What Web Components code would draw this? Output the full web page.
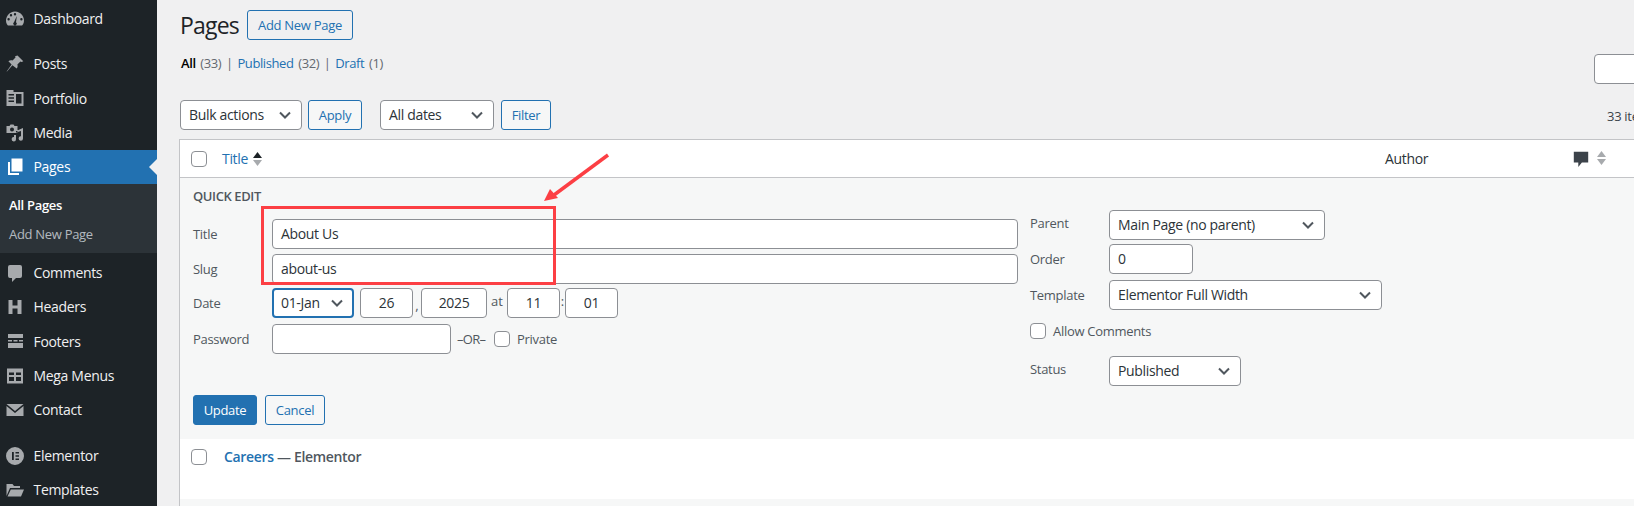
<!DOCTYPE html>
<html><head><meta charset="utf-8">
<style>
html,body{margin:0;padding:0;height:506px;overflow:hidden;background:#f0f0f1}
body{font:13px/1.4 "Open Sans","Noto Sans",sans-serif;color:#3c434a}
wp-app{display:flex;width:1634px;height:506px}
</style></head><body>
<wp-app></wp-app>
<script>
const ICONS={
dash:'<path d="M10 2.500a9 9 0 0 0-8.700 11.200c.3 1 .9 2 1.600 2.800h14.200c.7-.8 1.300-1.800 1.600-2.800A9 9 0 0 0 10 2.500zM6 5a1.200 1.200 0 1 1 0 2.400A1.200 1.200 0 0 1 6 5zm4-1a1.200 1.200 0 1 1 0 2.400A1.200 1.200 0 0 1 10 4zM3.600 9a1.200 1.200 0 1 1 0 2.400 1.200 1.200 0 0 1 0-2.400zm12.800 0a1.200 1.200 0 1 1 0 2.400 1.200 1.200 0 0 1 0-2.400zM11.800 7l-.8 6.200a1.700 1.700 0 1 1-2 0z" fill-rule="evenodd"/>',
pin:'<path d="M12.500 1.500l5.800 5.800-1.700.6-1.200-.5-3 3c.5 1.600.2 3-.7 4.100L7.400 11.200 2 17.600l-.4-.2 5-6.900L3.400 7.200c1.100-.9 2.600-1.200 4.100-.7l3-3-.4-1.200z"/>',
folio:'<path d="M1.500 2h7v2h10v14h-17zm2 4v1.500h5.500V6zm0 3.200v1.600h5.500V9.200zm0 3.300V14h5.500v-1.500zM11 6v9.500h5.500V6z" fill-rule="evenodd"/>',
media:'<path d="M1.500 3h3l1-1.500h3L9.500 3h3v7h-11zm5.500 1.500a2 2 0 1 0 0 4 2 2 0 0 0 0-4zM18 5v10.500a2.200 2.200 0 1 1-2-2.200V8l-5 1.500v6.700a2.200 2.200 0 1 1-2-2.200v-2h2V8l7-3z" fill-rule="evenodd"/>',
pages:'<path d="M6.500 1.500h11v13h-11z" fill="#fff"/><path d="M3 5h2v11h9v2H3z" fill="#fff"/>',
comment:'<path d="M5 2h10a2 2 0 0 1 2 2v9a2 2 0 0 1-2 2h-4l-4 4v-4H5a2 2 0 0 1-2-2V4a2 2 0 0 1 2-2z"/>',
h:'<path d="M3.500 3h4v5.500h5V3h4v14h-4v-5.500h-5V17h-4z"/>',
foot:'<path d="M3 3h15v4H3zM3 9h4v1.500H3zM8.500 9h4v1.500h-4zM14 9h4v1.500h-4zM3 12h15v5H3z"/>',
mega:'<path d="M2 2.500h16v15H2zm2 4v2.500h5V6.500zm7 0v2.500h5V6.500zM4 11v4h5v-4zm7 0v4h5v-4z" fill-rule="evenodd"/>',
mail:'<path d="M1.500 4h17L10 11zM1.500 6l8.500 7 8.500-7v10h-17z"/>',
el:'<path d="M10 1a9 9 0 1 0 0 18 9 9 0 0 0 0-18zM7 6h1.800v8H7zm3.500 0H14v1.600h-3.500zm0 3.200H14v1.600h-3.500zm0 3.200H14V14h-3.500z" fill-rule="evenodd"/>',
tpl:'<path d="M1.500 4h6l1.500 2h6v2H5l-3.500 8zM5.800 9.500H19l-3 7H2.500z"/>'
};
function def(name,css,html){
  customElements.define(name,class extends HTMLElement{
    constructor(){super();const s=this.attachShadow({mode:'open'});
      s.innerHTML='<style>'+css+'</style>'+(typeof html==='function'?html(this):html);}
  });
}
def('wp-menu-item',`:host{display:flex;align-items:center;height:34.200px;color:#f0f0f1;font-size:14px;letter-spacing:-.32px}
.i{width:30px;margin-left:0;display:flex;justify-content:center;flex:none}
svg{width:20px;height:20px;fill:#a7aaad}
.t{margin-left:3.500px}
:host([current]){background:#2271b1;color:#fff;position:relative;width:157px}
:host([current])::after{content:"";position:absolute;right:0;top:50%;margin-top:-8px;border:8px solid transparent;border-right-color:#f0f0f1}
`,h=>`<span class="i"><svg viewBox="0 0 20 20">${ICONS[h.getAttribute('icon')]}</svg></span><span class="t"><slot></slot></span>`);
def('wp-submenu',`:host{display:flex;flex-direction:column;background:#2c3338;padding:7px 0 4px;height:58px;margin-bottom:3px;font-size:13px;letter-spacing:-.3px;color:rgba(240,246,252,.7)}
::slotted(*){display:block;height:29px;line-height:29px;padding-left:9px}
`,`<slot></slot>`);
def('wp-sidebar',`:host{display:block;width:157px;height:506px;background:#1d2327;flex:none;overflow:hidden}
.gap{height:11px}.gap2{height:12px}`,`<div style="height:2px"></div><slot name="a"></slot><div class="gap"></div><slot name="b"></slot><div class="gap2"></div><slot name="c"></slot>`);
def('wp-button',`:host{display:inline-flex;align-items:center;justify-content:center;box-sizing:border-box;height:30px;border:1px solid #2271b1;border-radius:3px;color:#2271b1;background:#f6f7f7;font-size:13px;letter-spacing:-.3px;flex:none}
:host([primary]){background:#2271b1;color:#fff}
:host([plain]){background:transparent}`,`<slot></slot>`);
def('wp-field',`:host{display:flex;align-items:center;box-sizing:border-box;height:30px;border:1px solid #8c8f94;border-radius:4px;background:#fff;color:#2c3338;font-size:14px;letter-spacing:-.33px;padding:0 8px;flex:none;white-space:nowrap}
:host([center]){justify-content:center}
:host([focus]){border:2px solid #2271b1;padding:0 7px}
.c{margin-left:auto;width:16px;height:16px;fill:none;stroke:#50575e;stroke-width:2;display:none}
:host([select]) .c{display:block}
`,`<slot></slot><svg class="c" viewBox="0 0 16 16"><path d="M3 5.500l5 5 5-5"/></svg>`);
def('wp-check',`:host{display:block;box-sizing:border-box;width:16px;height:16px;border:1px solid #8c8f94;border-radius:4px;background:#fff;flex:none}`,``);
def('wp-row',`:host{display:flex;align-items:center;height:30px;flex:none}
.l{width:79px;color:#50575e;font-size:13px;letter-spacing:-.3px;flex:none}`,h=>`<span class="l">${h.getAttribute('label')}</span><slot></slot>`);
def('wp-quickedit',`:host{display:flex;background:#f6f7f7;height:262px;box-sizing:border-box;padding:9px 0 0 13px;border-top:1px solid #c3c4c7}
.left{width:837px;flex:none;display:flex;flex-direction:column}
.right{display:flex;flex-direction:column;margin-top:23px;flex:none}
.h{font-size:13px;font-weight:600;color:#50575e;height:32px;line-height:18px;letter-spacing:-.4px}
`,`<div class="left"><div class="h">QUICK EDIT</div><slot name="left"></slot></div><div class="right"><slot name="right"></slot></div>`);
def('wp-annotation',`:host{display:block;position:absolute;left:-157px;top:0;width:0;height:0}
.r{position:absolute;left:261px;top:206px;width:295px;height:79px;box-sizing:border-box;border:3px solid #fc3f44}
svg{position:absolute;left:540px;top:150px;width:72px;height:55px}`,
`<div class="r"></div><svg viewBox="0 0 72 55"><path d="M68 5L14 45" stroke="#fc3f44" stroke-width="3.500" fill="none"/><path d="M4 51L10 39 18 48z" fill="#fc3f44"/></svg>`);
def('wp-pages',`:host{display:flex;flex-direction:column;flex:1;min-width:0;padding-left:22px;overflow:hidden;position:relative}
.top,.sub,.bar,.table{flex:none}
.top{display:flex;align-items:center;height:30px;margin-top:10px;gap:8px;margin-left:1px}
h1{font-size:23px;font-weight:400;color:#1d2327;margin:0;letter-spacing:-.8px;line-height:30px}
.sub{display:flex;height:20px;margin-top:14px;margin-left:2px;font-size:13px;letter-spacing:-.4px;color:#646970;gap:4.700px;position:relative}
.sub b{font-weight:600;color:#000}.sub a{color:#2271b1}
.search{position:absolute;left:1413px;top:0;width:60px;height:30px;box-sizing:border-box;border:1px solid #8c8f94;border-radius:4px;background:#fff}
.bar{display:flex;height:30px;margin-top:26px;margin-left:1px;position:relative}
.items{position:absolute;left:1427px;top:7px;font-size:13px;letter-spacing:-.3px;color:#3c434a;white-space:nowrap}
.table{margin-top:9px;border:1px solid #c3c4c7;border-right:0;background:#fff;width:1460px;box-sizing:border-box;height:370px}
.th{display:flex;align-items:center;height:37px;position:relative}
.th a{color:#2271b1;font-size:14px;letter-spacing:-.33px;margin-left:15px}
.author{position:absolute;left:1205px;font-size:14px;letter-spacing:-.33px;color:#2c3338}
.cm{position:absolute;left:1392px;top:9px;width:18px;height:18px;fill:#3c434a}
.sort{margin-left:5px;width:9px;height:16px}
.sort2{position:absolute;left:1417px;top:10px;width:9px;height:16px}
.tr{height:60px;display:flex;padding:10px 0 0 11px;box-sizing:border-box;font-size:14px;letter-spacing:-.33px}
.tr span{margin-left:17px;font-weight:600;color:#50575e;margin-top:-2px}.tr a{color:#2271b1}
.foot{height:10px;background:#f6f7f7}
`,`<div class="top"><h1>Pages</h1><wp-button plain style="width:106px">Add New Page</wp-button></div>
<div class="sub"><b>All</b><span>(33)</span><span>|</span><a>Published</a><span>(32)</span><span>|</span><a>Draft</a><span>(1)</span><div class="search"></div></div>
<div class="bar"><wp-field select style="width:122px">Bulk actions</wp-field><wp-button style="width:54px;margin-left:6px">Apply</wp-button><wp-field select style="width:114px;margin-left:18px">All dates</wp-field><wp-button style="width:50px;margin-left:7px">Filter</wp-button><div class="items">33 items</div></div>
<div class="table"><div class="th"><wp-check style="margin-left:11px"></wp-check><a>Title</a><svg class="sort" viewBox="0 0 9 16"><path d="M4.500 1L9 7H0z" fill="#1d2327"/><path d="M4.500 15L9 9H0z" fill="#a7aaad"/></svg><span class="author">Author</span><svg class="cm" viewBox="0 0 20 20"><path d="M2 3h16v12h-7l-4 5v-5H2z"/></svg><svg class="sort2" viewBox="0 0 9 16"><path d="M4.500 1L9 7H0z" fill="#a7aaad"/><path d="M4.500 15L9 9H0z" fill="#a7aaad"/></svg></div>
<wp-quickedit>
<wp-row slot="left" label="Title"><wp-field style="width:746px">About Us</wp-field></wp-row>
<wp-row slot="left" label="Slug" style="margin-top:5px"><wp-field style="width:746px">about-us</wp-field></wp-row>
<wp-row slot="left" label="Date" style="margin-top:4px"><wp-field select focus style="width:82px">01-Jan</wp-field><wp-field center style="width:53px;margin-left:6px">26</wp-field><span style="width:8px;text-align:center;color:#50575e;margin-top:4px">,</span><wp-field center style="width:66px">2025</wp-field><span style="width:20px;text-align:center;color:#50575e;margin-top:-3px">at</span><wp-field center style="width:53px">11</wp-field><span style="width:5px;text-align:center;color:#50575e;margin-top:-3px">:</span><wp-field center style="width:53px">01</wp-field></wp-row>
<wp-row slot="left" label="Password" style="margin-top:6px"><wp-field style="width:179px"></wp-field><span style="margin-left:6px;width:37px;color:#50575e;letter-spacing:-.7px;font-size:13px">–OR–</span><wp-check></wp-check><span style="margin-left:7px;color:#50575e;letter-spacing:-.3px">Private</span></wp-row>
<div slot="left" style="display:flex;gap:8px;margin-top:41px"><wp-button primary style="width:64px">Update</wp-button><wp-button style="width:60px">Cancel</wp-button></div>
<wp-row slot="right" label="Parent" style="align-items:flex-start;line-height:26px"><wp-field select style="width:216px">Main Page (no parent)</wp-field></wp-row>
<wp-row slot="right" label="Order" style="margin-top:4px"><wp-field style="width:84px">0</wp-field></wp-row>
<wp-row slot="right" label="Template" style="margin-top:6px"><wp-field select style="width:273px">Elementor Full Width</wp-field></wp-row>
<div slot="right" style="display:flex;align-items:center;height:16px;margin-top:13px;gap:7px;color:#50575e;letter-spacing:-.3px"><wp-check></wp-check>Allow Comments</div>
<wp-row slot="right" label="Status" style="margin-top:17px;align-items:flex-start;line-height:26px"><wp-field select style="width:132px">Published</wp-field></wp-row>
</wp-quickedit>
<div class="tr"><wp-check></wp-check><span><a>Careers</a> — Elementor</span></div><div class="foot"></div></div>
<wp-annotation></wp-annotation>`);
document.querySelector('wp-app').innerHTML=`<wp-sidebar>
<wp-menu-item slot="a" icon="dash">Dashboard</wp-menu-item>
<div slot="b"><wp-menu-item icon="pin">Posts</wp-menu-item><wp-menu-item icon="folio">Portfolio</wp-menu-item><wp-menu-item icon="media">Media</wp-menu-item><wp-menu-item icon="pages" current>Pages</wp-menu-item>
<wp-submenu><b style="color:#fff;font-weight:600">All Pages</b><span>Add New Page</span></wp-submenu>
<wp-menu-item icon="comment">Comments</wp-menu-item><wp-menu-item icon="h">Headers</wp-menu-item><wp-menu-item icon="foot">Footers</wp-menu-item><wp-menu-item icon="mega">Mega Menus</wp-menu-item><wp-menu-item icon="mail">Contact</wp-menu-item></div>
<div slot="c"><wp-menu-item icon="el">Elementor</wp-menu-item><wp-menu-item icon="tpl">Templates</wp-menu-item></div>
</wp-sidebar><wp-pages></wp-pages>`;
</script>
</body></html>
